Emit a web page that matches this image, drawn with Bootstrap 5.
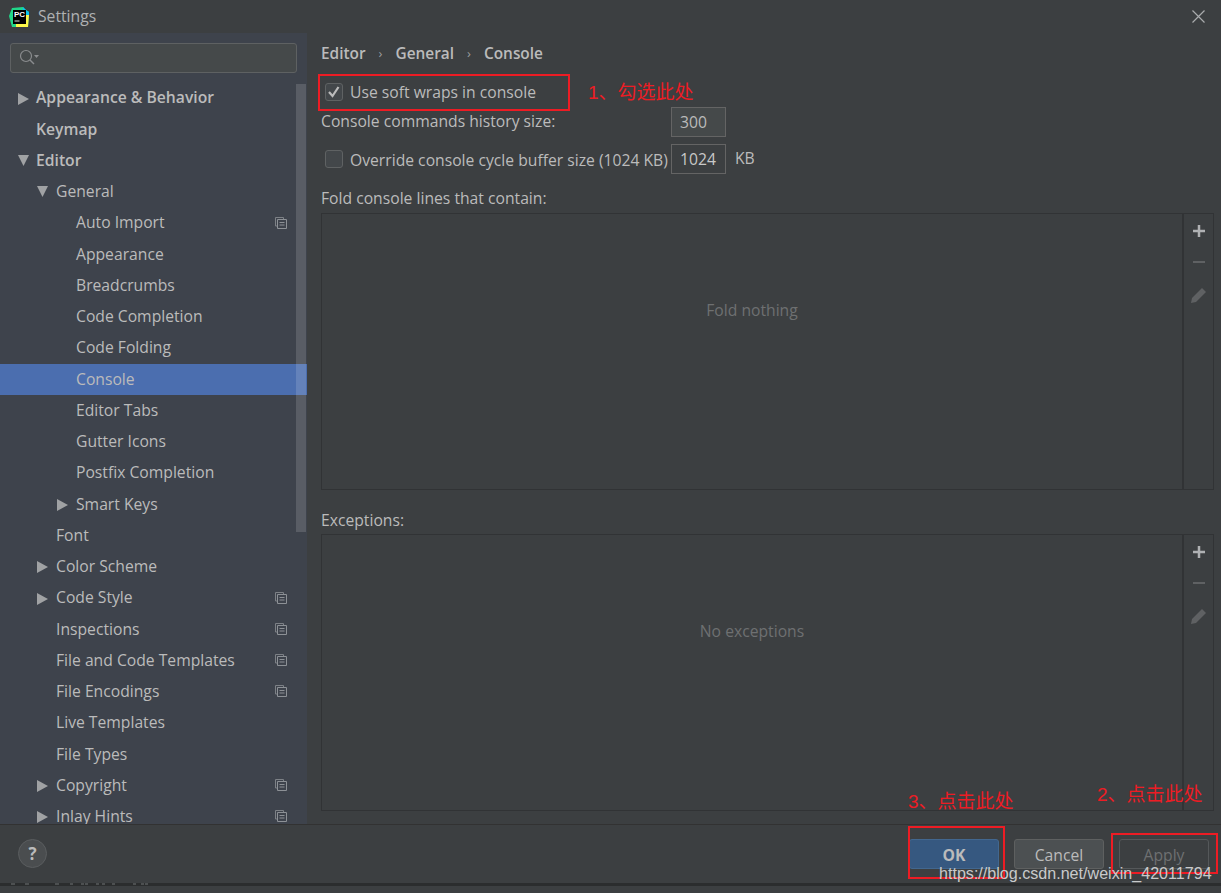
<!DOCTYPE html>
<html lang="en">
  <head>
    <meta charset="UTF-8" />
    <meta name="viewport" content="width=device-width, initial-scale=1.0" />
    <title>Settings</title>
    <link href="https://cdn.jsdelivr.net/npm/bootstrap@5.3.0/dist/css/bootstrap.min.css" rel="stylesheet" />
    <style>
      body {
        width: 1221px;
        height: 893px;
        overflow: hidden;
        background: #3c3f41;
        color: #bbbbbb;
        font-family: "Open Sans", "Noto Sans CJK SC", sans-serif;
        font-size: 15.7px;
        position: relative;
      }
      .title-bar { height: 33px; padding-left: 9px; }
      .title-text { font-size: 15.7px; margin-left: 9px; color: #afb1b3; }
      .close-x { margin-left: auto; margin-right: 16px; }
      .main-area { height: 791px; }
      .side-pane { width: 307px; background: #3e434c; position: relative; overflow: hidden; flex: none; }
      .search-box { margin: 10px 10px 0; width: 287px; height: 30px; background: #45494a; border: 1px solid #5e6162; border-radius: 3px; padding-left: 8px; }
      .tree-list { margin: 9.500px 0 0; padding: 0; list-style: none; }
      .tree-row { height: 31.26px; position: relative; white-space: nowrap; }
      .tree-row.top-lvl { font-weight: 600; padding-left: 36px; }
      .tree-row.lvl1 { padding-left: 56px; }
      .tree-row.lvl2 { padding-left: 76px; }
      .tree-row.picked { background: #4b6eaf; }
      .arrow { position: absolute; top: 10px; }
      .top-lvl .arrow { left: 18px; }
      .lvl1 .arrow { left: 37px; }
      .lvl2 .arrow { left: 57px; }
      .copy-icon { position: absolute; left: 275px; top: 9px; }
      .side-scroll { position: absolute; left: 296px; top: 51px; width: 10px; height: 448px; background: rgba(255, 255, 255, 0.14); }
      .content-pane { padding: 10px 7px 0 14px; flex: 1; min-width: 0; }
      .crumbs { height: 20px; font-weight: 600; font-size: 15.4px; padding-top: 2px; }
      .crumb-sep { font-weight: 400; font-size: 13px; margin: 0 13px; color: #9a9c9e; }
      .check-row { height: 28px; margin-top: 15px; padding-left: 4px; }
      .check-label { padding-top: 2px; }
      .dark-check.form-check-input { width: 18px; height: 18px; margin: 0 7px 0 0; background-color: #43474a; border: 1px solid #5f6263; border-radius: 3px; box-shadow: none; flex: none; }
      .dark-check.form-check-input:checked { background-color: #43474a; border-color: #5f6263; background-image: url("data:image/svg+xml,%3csvg xmlns='http://www.w3.org/2000/svg' viewBox='0 0 18 18'%3e%3cpath fill='none' stroke='%23bbbbbb' stroke-width='2.2' d='M4 9l3.5 4L13.5 4'/%3e%3c/svg%3e"); background-size: 18px; }
      .size-input.form-control { width: 55px; height: 30px; padding: 0 0 0 8px; background: #45494a; border: 1px solid #646464; border-radius: 0; color: #bbbbbb; font-size: 15.7px; box-shadow: none; flex: none; }
      .size-input.form-control.plain-bg { background: #3c3f41; color: #c8c8c8; }
      .input-row-a { height: 30px; margin-top: 1px; }
      .input-row-b { height: 30px; margin-top: 7px; padding-left: 4px; }
      .label-wide { width: 350px; flex: none; }
      .label-mid { width: 321px; flex: none; white-space: nowrap; padding-top: 3px; }
      .kb-unit { margin-left: 9px; }
      .field-label { height: 20px; margin-top: 14px; line-height: 20px; }
      .field-label.second { margin-top: 20px; }
      .rule-table { height: 277px; margin-top: 5px; border: 1px solid #313335; }
      .rule-table.second { margin-top: 4px; }
      .rule-empty { color: #6e7071; padding-bottom: 81px; }
      .rule-tools { width: 31px; border-left: 2px solid #313335; padding-top: 8px; gap: 13px; }
      .tool-btn { height: 18px; }
      .pencil-btn { margin-top: 2px; }
      .foot-bar { height: 59px; border-top: 1px solid #323232; padding: 14px 12px 0 18px; }
      .help-btn { width: 29px; height: 29px; border-radius: 50%; background: #4a4d4f; border: 1px solid #5a5d5f; font-weight: 700; font-size: 17px; color: #bbbbbb; line-height: 1; }
      .foot-btn.btn { width: 90px; height: 30px; padding: 3px 0 0; font-size: 15.7px; border-radius: 3px; margin-left: 15px; color: #bbbbbb; background: #4c5052; border: 1px solid #5e6060; }
      .foot-btn.btn.ok-btn { background: #365880; border-color: #42678f; font-weight: 700; }
      .foot-btn.btn.off-btn { background: #3c3f41; border-color: #55585a; color: #6e7071; opacity: 1; }
      .bottom-line { display: block; height: 3px; width: 1221px; background: #2b2d2e; }
      .red-box { position: absolute; border: 2px solid #ed1c24; }
      .red-note { position: absolute; color: #ed1c24; font-size: 19px; line-height: 24px; white-space: nowrap; font-family: "Liberation Sans", "Noto Sans CJK SC", sans-serif; }
      .water-mark { position: absolute; left: 939px; top: 863px; font-family: "Liberation Sans", sans-serif; font-size: 16.100px; line-height: 20px; color: #c9cacb; white-space: nowrap; }
    </style>
  </head>
  <body>
    <svg width="0" height="0" class="position-absolute">
      <symbol id="tri-right" viewBox="0 0 11 12"><path d="M0 0l11 6-11 6z" fill="#a0a2a4" /></symbol>
      <symbol id="tri-down" viewBox="0 0 11 11"><path d="M0 0h11L5.500 11z" fill="#a0a2a4" /></symbol>
      <symbol id="copy-sym" viewBox="0 0 12 12">
        <path d="M8.500 2V.500H.500v8.500H2" fill="none" stroke="#7d8186" />
        <path d="M2.500 2.500h9v9h-9z" fill="none" stroke="#8d9196" />
        <path d="M4.500 5.500h5M4.500 8h5" stroke="#8d9196" />
      </symbol>
    </svg>

    <div class="title-bar d-flex align-items-center">
      <svg width="20" height="20" viewBox="0 0 20 20">
        <path d="M3 1l11-1 3 3 3 2-1 15H3L0 9z" fill="#21d789" />
        <path d="M14 0l3 3 3 2v5H13z" fill="#07c3f2" />
        <path d="M20 8l-1 12H7v-4h9V8z" fill="#fcf84a" />
        <rect x="4" y="3" width="13" height="14" fill="#000" />
        <text x="5" y="10" font-size="8" font-weight="700" fill="#fff" font-family="Liberation Sans">PC</text>
        <rect x="5.500" y="13.500" width="5" height="1" fill="#ddd" />
      </svg>
      <span class="title-text">Settings</span>
      <svg class="close-x" width="13" height="13" viewBox="0 0 13 13"><path d="M.5.500l12 12M12.500.500l-12 12" stroke="#a9abad" stroke-width="1.200" /></svg>
    </div>

    <div class="main-area d-flex">
      <div class="side-pane">
        <div class="search-box d-flex align-items-center">
          <svg width="20" height="18" viewBox="0 0 20 18">
            <circle cx="7" cy="7" r="5.500" fill="none" stroke="#8a8c8e" stroke-width="1.200" />
            <path d="M11 11l4 4" stroke="#8a8c8e" stroke-width="1.500" />
            <path d="M15 6h5l-2.500 3z" fill="#8a8c8e" />
          </svg>
        </div>
        <ul class="tree-list">
          <li class="tree-row top-lvl d-flex align-items-center"><svg class="arrow" width="11" height="12"><use href="#tri-right" /></svg>Appearance &amp; Behavior</li>
          <li class="tree-row top-lvl d-flex align-items-center">Keymap</li>
          <li class="tree-row top-lvl d-flex align-items-center"><svg class="arrow" width="11" height="11"><use href="#tri-down" /></svg>Editor</li>
          <li class="tree-row lvl1 d-flex align-items-center"><svg class="arrow" width="11" height="11"><use href="#tri-down" /></svg>General</li>
          <li class="tree-row lvl2 d-flex align-items-center">Auto Import<svg class="copy-icon" width="12" height="12"><use href="#copy-sym" /></svg></li>
          <li class="tree-row lvl2 d-flex align-items-center">Appearance</li>
          <li class="tree-row lvl2 d-flex align-items-center">Breadcrumbs</li>
          <li class="tree-row lvl2 d-flex align-items-center">Code Completion</li>
          <li class="tree-row lvl2 d-flex align-items-center">Code Folding</li>
          <li class="tree-row lvl2 picked d-flex align-items-center">Console</li>
          <li class="tree-row lvl2 d-flex align-items-center">Editor Tabs</li>
          <li class="tree-row lvl2 d-flex align-items-center">Gutter Icons</li>
          <li class="tree-row lvl2 d-flex align-items-center">Postfix Completion</li>
          <li class="tree-row lvl2 d-flex align-items-center"><svg class="arrow" width="11" height="12"><use href="#tri-right" /></svg>Smart Keys</li>
          <li class="tree-row lvl1 d-flex align-items-center">Font</li>
          <li class="tree-row lvl1 d-flex align-items-center"><svg class="arrow" width="11" height="12"><use href="#tri-right" /></svg>Color Scheme</li>
          <li class="tree-row lvl1 d-flex align-items-center"><svg class="arrow" width="11" height="12"><use href="#tri-right" /></svg>Code Style<svg class="copy-icon" width="12" height="12"><use href="#copy-sym" /></svg></li>
          <li class="tree-row lvl1 d-flex align-items-center">Inspections<svg class="copy-icon" width="12" height="12"><use href="#copy-sym" /></svg></li>
          <li class="tree-row lvl1 d-flex align-items-center">File and Code Templates<svg class="copy-icon" width="12" height="12"><use href="#copy-sym" /></svg></li>
          <li class="tree-row lvl1 d-flex align-items-center">File Encodings<svg class="copy-icon" width="12" height="12"><use href="#copy-sym" /></svg></li>
          <li class="tree-row lvl1 d-flex align-items-center">Live Templates</li>
          <li class="tree-row lvl1 d-flex align-items-center">File Types</li>
          <li class="tree-row lvl1 d-flex align-items-center"><svg class="arrow" width="11" height="12"><use href="#tri-right" /></svg>Copyright<svg class="copy-icon" width="12" height="12"><use href="#copy-sym" /></svg></li>
          <li class="tree-row lvl1 d-flex align-items-center"><svg class="arrow" width="11" height="12"><use href="#tri-right" /></svg>Inlay Hints<svg class="copy-icon" width="12" height="12"><use href="#copy-sym" /></svg></li>
        </ul>
        <div class="side-scroll"></div>
      </div>

      <div class="content-pane">
        <div class="crumbs d-flex align-items-center">Editor<span class="crumb-sep">›</span>General<span class="crumb-sep">›</span>Console</div>

        <div class="check-row d-flex align-items-center">
          <input class="form-check-input dark-check" type="checkbox" checked />
          <span class="check-label">Use soft wraps in console</span>
        </div>
        <div class="input-row-a d-flex align-items-center">
          <span class="label-wide">Console commands history size:</span>
          <input class="form-control size-input" type="text" value="300" />
        </div>
        <div class="input-row-b d-flex align-items-center">
          <input class="form-check-input dark-check" type="checkbox" />
          <span class="label-mid">Override console cycle buffer size (1024 KB)</span>
          <input class="form-control size-input plain-bg" type="text" value="1024" />
          <span class="kb-unit">KB</span>
        </div>

        <div class="field-label">Fold console lines that contain:</div>
        <div class="rule-table d-flex">
          <div class="rule-empty flex-grow-1 d-flex align-items-center justify-content-center">Fold nothing</div>
          <div class="rule-tools d-flex flex-column align-items-center">
            <svg class="tool-btn" width="14" height="18" viewBox="0 0 14 18"><path d="M7 3v12M1 9h12" stroke="#afb1b3" stroke-width="2.500" /></svg>
            <svg class="tool-btn" width="14" height="18" viewBox="0 0 14 18"><path d="M1 9h12" stroke="#5f6163" stroke-width="2" /></svg>
            <svg class="tool-btn pencil-btn" width="18" height="18" viewBox="0 0 18 18"><path d="M1 17l1-5L12 2l4 4L6 16z" fill="#5f6163" /></svg>
          </div>
        </div>

        <div class="field-label second">Exceptions:</div>
        <div class="rule-table second d-flex">
          <div class="rule-empty flex-grow-1 d-flex align-items-center justify-content-center">No exceptions</div>
          <div class="rule-tools d-flex flex-column align-items-center">
            <svg class="tool-btn" width="14" height="18" viewBox="0 0 14 18"><path d="M7 3v12M1 9h12" stroke="#afb1b3" stroke-width="2.500" /></svg>
            <svg class="tool-btn" width="14" height="18" viewBox="0 0 14 18"><path d="M1 9h12" stroke="#5f6163" stroke-width="2" /></svg>
            <svg class="tool-btn pencil-btn" width="18" height="18" viewBox="0 0 18 18"><path d="M1 17l1-5L12 2l4 4L6 16z" fill="#5f6163" /></svg>
          </div>
        </div>
      </div>
    </div>

    <div class="foot-bar d-flex align-items-start">
      <div class="help-btn d-flex align-items-center justify-content-center">?</div>
      <div class="ms-auto d-flex">
        <button class="btn foot-btn ok-btn" type="button">OK</button>
        <button class="btn foot-btn" type="button">Cancel</button>
        <button class="btn foot-btn off-btn" type="button" disabled>Apply</button>
      </div>
    </div>
    <svg class="bottom-line" viewBox="0 0 1221 3">
      <path d="M11 1h4M25 1h4M55 1h4M70 1h3M81 1h3M85 1h3M96 1h3M102 1h3M112 1h3M133 1h3M141 1h3M145 1h3" stroke="#5a5c5e" stroke-width="1.500" />
    </svg>

    <div class="red-box" style="left: 318px; top: 74px; width: 252px; height: 37px"></div>
    <div class="red-box" style="left: 908px; top: 826px; width: 97px; height: 53px"></div>
    <div class="red-box" style="left: 1111px; top: 833px; width: 107px; height: 41px"></div>
    <div class="red-note" style="left: 588px; top: 81px">1、勾选此处</div>
    <div class="red-note" style="left: 908px; top: 790px">3、点击此处</div>
    <div class="red-note" style="left: 1097px; top: 783px">2、点击此处</div>
    <div class="water-mark">https://blog.csdn.net/weixin_42011794</div>

    <script src="https://cdn.jsdelivr.net/npm/bootstrap@5.3.0/dist/js/bootstrap.bundle.min.js"></script>
  </body>
</html>
